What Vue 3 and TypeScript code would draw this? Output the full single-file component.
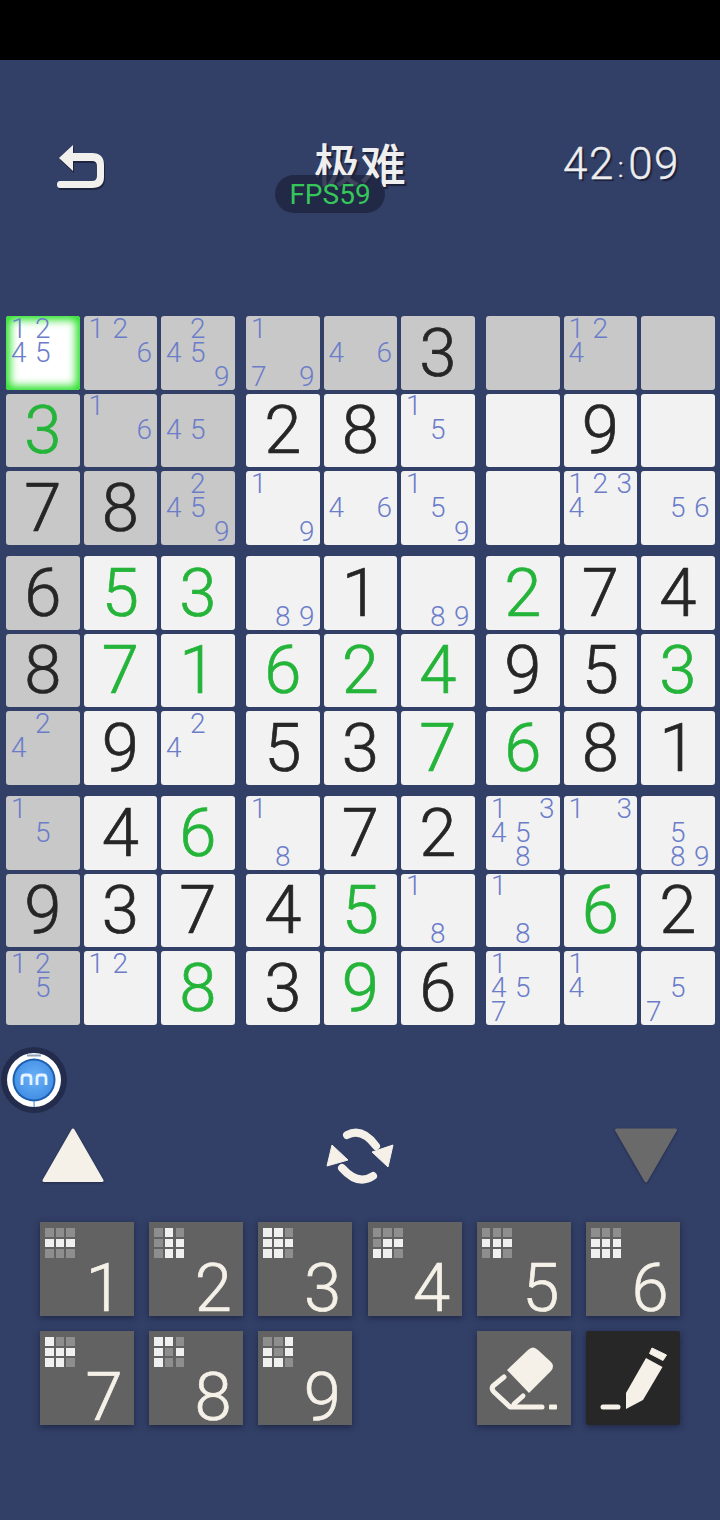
<script setup lang="ts">
interface Cell { v?: string; given?: boolean; notes?: number[]; gray?: boolean; sel?: boolean }
const g = (v: number): Cell => ({ v: String(v), given: false })
const k = (v: number): Cell => ({ v: String(v), given: true })
const n = (...notes: number[]): Cell => ({ notes })
const rows: Cell[][] = [
  [n(1,2,4,5), n(1,2,6), n(2,4,5,9), n(1,7,9), n(4,6), k(3), n(), n(1,2,4), n()],
  [g(3), n(1,6), n(4,5), k(2), k(8), n(1,5), n(), k(9), n()],
  [k(7), k(8), n(2,4,5,9), n(1,9), n(4,6), n(1,5,9), n(), n(1,2,3,4), n(5,6)],
  [k(6), g(5), g(3), n(8,9), k(1), n(8,9), g(2), k(7), k(4)],
  [k(8), g(7), g(1), g(6), g(2), g(4), k(9), k(5), g(3)],
  [n(2,4), k(9), n(2,4), k(5), k(3), g(7), g(6), k(8), k(1)],
  [n(1,5), k(4), g(6), n(1,8), k(7), k(2), n(1,3,4,5,8), n(1,3), n(5,8,9)],
  [k(9), k(3), k(7), k(4), g(5), n(1,8), n(1,8), g(6), k(2)],
  [n(1,2,5), n(1,2), g(8), k(3), g(9), k(6), n(1,4,5,7), n(1,4), n(5,7)],
]
rows.forEach((r, y) => r.forEach((c, x) => {
  c.gray = y === 0 || x === 0 || (x < 3 && y < 3)
  c.sel = x === 0 && y === 0
}))
const blocks = [0,1,2,3,4,5,6,7,8].map(b => {
  const bx = (b % 3) * 3, by = Math.floor(b / 3) * 3
  const out: Cell[] = []
  for (let y = by; y < by + 3; y++) for (let x = bx; x < bx + 3; x++) out.push(rows[y][x])
  return out
})
const keys = [
  { d: 1, m: '000111000' }, { d: 2, m: '010011011' }, { d: 3, m: '110111110' },
  { d: 4, m: '000011110' }, { d: 5, m: '000111010' }, { d: 6, m: '000111111' },
  { d: 7, m: '100111110' }, { d: 8, m: '110101100' }, { d: 9, m: '001101110' },
]
const firstRow = keys.slice(0, 6)
const secondRow = keys.slice(6)
</script>

<template>
  <div class="page">
    <div class="statusbar"></div>
    <header class="head">
      <svg class="back" viewBox="0 0 50 46" width="50" height="46">
        <path d="M3 14 L17 1 L17 9 L36 9 Q48 9 48 21 L48 33 Q48 44 36 44 L4 44 Q1 44 1 40.500 Q1 37 4 37 L36 37 Q41 37 41 32 L41 22 Q41 17 36 17 L17 17 L17 27 Z" fill="#f2f0ec"/>
      </svg>
      <div class="title">极难</div>
      <div class="fps">FPS59</div>
      <div class="timer">42<span class="colon">:</span>09</div>
    </header>
    <main class="board">
      <div v-for="(b, i) in blocks" :key="i" class="block">
        <div v-for="(c, j) in b" :key="j" class="cell" :class="{ gray: c.gray, sel: c.sel }">
          <span v-if="c.v" class="big" :class="{ green: !c.given }">{{ c.v }}</span>
          <div v-else class="notes">
            <span v-for="d in 9" :key="d" class="note">{{ c.notes && c.notes.includes(d) ? d : '' }}</span>
          </div>
        </div>
      </div>
    </main>
    <div class="ball-row">
      <svg width="66" height="66" viewBox="0 0 66 66">
        <defs>
          <radialGradient id="core" cx="50%" cy="45%" r="60%">
            <stop offset="0%" stop-color="#6cb2f7"/>
            <stop offset="100%" stop-color="#3f8ce4"/>
          </radialGradient>
        </defs>
        <circle cx="33" cy="33" r="33" fill="#232c4c"/>
        <circle cx="33" cy="33" r="27" fill="#ffffff"/>
        <circle cx="33" cy="33" r="21.500" fill="#1d5fae"/>
        <circle cx="33" cy="33" r="19.500" fill="url(#core)"/>
        <rect x="26" y="7.500" width="14" height="2" fill="#8fa3bd"/>
        <rect x="32.500" y="54" width="1.200" height="6" fill="#5f93cf"/>
        <path d="M21 38V31Q21 28 24 28H27Q30 28 30 31V38M36 38V31Q36 28 39 28H42Q45 28 45 31V38" fill="none" stroke="#e6f2ff" stroke-width="2.800"/>
      </svg>
    </div>
    <div class="arrows">
      <svg class="up" width="66" height="60" viewBox="0 0 66 60"><path d="M32 4 L61 54.500 H3 Z" fill="#f5f1e8" stroke="#f5f1e8" stroke-width="3" stroke-linejoin="round"/></svg>
      <svg class="sync" width="68" height="60" viewBox="0 0 68 60">
        <path d="M21 9 Q36 1 50 20" fill="none" stroke="#f5f1e8" stroke-width="8" stroke-linecap="round"/>
        <path d="M62 41 L46 26 L67 19 Z" fill="#f5f1e8" stroke="#f5f1e8" stroke-width="1" stroke-linejoin="round"/>
        <path d="M47 50 Q32 60 16 42" fill="none" stroke="#f5f1e8" stroke-width="8" stroke-linecap="round"/>
        <path d="M6 19 L1 40 L22 34 Z" fill="#f5f1e8" stroke="#f5f1e8" stroke-width="1" stroke-linejoin="round"/>
      </svg>
      <svg class="down" width="66" height="60" viewBox="0 0 66 60"><path d="M33 55 L62.500 4 H3.500 Z" fill="#6a6a6a" stroke="#6a6a6a" stroke-width="3" stroke-linejoin="round"/></svg>
    </div>
    <section class="pad">
      <div class="pad-row">
        <button v-for="key in firstRow" :key="key.d" class="key">
          <span class="mini"><i v-for="(ch, q) in key.m" :key="q" :class="{ on: ch === '1' }"></i></span>
          <span class="kd">{{ key.d }}</span>
        </button>
      </div>
      <div class="pad-row">
        <button v-for="key in secondRow" :key="key.d" class="key">
          <span class="mini"><i v-for="(ch, q) in key.m" :key="q" :class="{ on: ch === '1' }"></i></span>
          <span class="kd">{{ key.d }}</span>
        </button>
        <div class="key-spacer"></div>
        <button class="key">
          <svg viewBox="0 0 94 94" width="94" height="94">
            <path d="M30 39 L51 19 Q56 14 61 19 L74 31 Q78 35 74 40 L52 62 Z" fill="#f5f1e8"/>
            <path d="M27 46 L16 55 Q14 58 17 61 L33 76 H65" fill="none" stroke="#f5f1e8" stroke-width="5" stroke-linecap="round" stroke-linejoin="round"/>
            <path d="M37 73 L46 65" fill="none" stroke="#f5f1e8" stroke-width="5" stroke-linecap="round"/>
            <rect x="72" y="73.500" width="8" height="5" rx="1" fill="#f5f1e8"/>
          </svg>
        </button>
        <button class="key dark">
          <svg viewBox="0 0 94 94" width="94" height="94">
            <path d="M40 62 L60 27 L76.500 36 L57 69 L40 78 Z" fill="#f5f1e8"/>
            <path d="M66 17 L80.500 24 L77 29.500 L63.500 22.500 Z" fill="#f5f1e8" stroke="#f5f1e8" stroke-width="1" stroke-linejoin="round"/>
            <rect x="14.500" y="73.500" width="20" height="5" rx="2.500" fill="#f5f1e8"/>
          </svg>
        </button>
      </div>
    </section>
  </div>
</template>

<style>
html, body { margin: 0; padding: 0; background: #323f66; }
</style>
<style scoped>
.page { width: 720px; height: 1520px; background: #323f66; overflow: hidden; font-family: Roboto, "Noto Sans", sans-serif; }
.statusbar { height: 60px; background: #000; }
.head { height: 256px; position: relative; display: flex; align-items: flex-start; justify-content: space-between; padding: 84px 40px 0 56px; box-sizing: border-box; color: #eeeeee; }
.back { filter: drop-shadow(1px 2px 0 rgba(15, 20, 40, .6)); }
.title { position: absolute; left: 0; right: 0; top: 72px; text-align: center; font: 500 46px/60px "Noto Sans CJK SC", sans-serif; color: #efefef; text-shadow: 2px 2px 1px rgba(15, 20, 40, .7); }
.fps { position: absolute; left: 275px; top: 115px; width: 110px; height: 38px; border-radius: 19px; background: rgba(30, 38, 66, .85); color: #35c759; font: 400 28px/40px Roboto, sans-serif; text-align: center; }
.timer { font: 300 44px/46px Roboto, sans-serif; letter-spacing: 1.500px; text-shadow: 2px 2px 1px rgba(15, 20, 40, .7); margin-top: -3px; -webkit-text-stroke: 0.4px #eeeeee; }
.colon { position: relative; top: -2px; font-size: 28px; margin: 0 3px; }
.board { display: grid; grid-template-columns: repeat(3, 228.500px); gap: 11.500px; padding-left: 6px; }
.block { display: grid; grid-template-columns: repeat(3, 73.500px); grid-auto-rows: 73.500px; gap: 4px; }
.cell { background: #f2f2f2; border-radius: 3px; display: flex; align-items: center; justify-content: center; position: relative; }
.cell.gray { background: #c8c8c8; }
.cell.sel { background: #fff; box-shadow: inset 0 0 9px 4px #27e027; }
.big { font: 300 67px/74px Roboto, sans-serif; color: #262626; -webkit-text-stroke: 0.7px currentColor; }
.big.green { color: #25b43a; }
.notes { display: grid; grid-template-columns: repeat(3, 24px); grid-template-rows: repeat(3, 24px); }
.note { font: 300 28px/24px Roboto, sans-serif; color: #6b7dc9; text-align: center; }
.ball-row { padding: 22px 0 0 1px; height: 101.500px; box-sizing: border-box; }
.arrows { display: flex; justify-content: space-between; align-items: center; height: 60px; padding: 0 41px; }
.up, .down { filter: drop-shadow(0 1px 1px rgba(15, 20, 45, .5)); }
.pad { display: flex; flex-direction: column; gap: 15px; padding: 36px 40px 0; }
.pad-row { display: flex; gap: 15.400px; }
.key { width: 94px; height: 94px; padding: 0; border: 0; background: #626262; position: relative; box-shadow: 0 2px 6px rgba(15, 20, 45, .55); color: #f5f1e8; display: block; }
.key.dark { background: #272727; border-radius: 2px; }
.key-spacer { width: 94px; height: 94px; }
.mini { position: absolute; left: 5px; top: 6px; display: grid; grid-template-columns: repeat(3, 8.500px); grid-auto-rows: 8.500px; gap: 2.200px; }
.mini i { background: #8e8e8e; }
.mini i.on { background: #f0f0f0; }
.kd { position: absolute; left: 44px; width: 40px; top: 29px; text-align: center; font: 300 67px/74px Roboto, sans-serif; color: #f5f1e8; -webkit-text-stroke: 0.7px #f5f1e8; }
</style>
